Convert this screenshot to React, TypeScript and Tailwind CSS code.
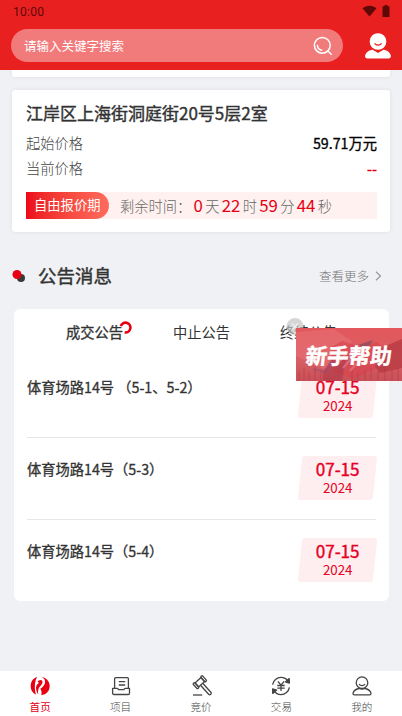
import type { ReactNode } from "react";

const notices = [
    { title: "体育场路14号 （5-1、5-2）", date: "07-15", year: "2024" },
    { title: "体育场路14号（5-3）", date: "07-15", year: "2024" },
    { title: "体育场路14号（5-4）", date: "07-15", year: "2024" },
];

const countdown = [
    { value: "0", unit: "天" },
    { value: "22", unit: "时" },
    { value: "59", unit: "分" },
    { value: "44", unit: "秒" },
];

const tabs = ["成交公告", "中止公告", "终结公告"];

const navItems: { label: string; icon: ReactNode; active?: boolean }[] = [
    {
        label: "首页",
        active: true,
        icon: (
            <g fill="#e60012" stroke="none">
                <path d="M7 1C3.200 2.200.7 5.800.7 10c0 4 2 7.300 5.300 8.600C4.300 13 4.400 6 7 1Z" />
                <path d="M7.200 6.200C8.600 4.200 11 3.400 12.200 4.800c1.100 1.500-.3 3.900-2.500 6-1.400 1.500-1.900 4-1.500 7.700C6 15.500 5.500 11.500 6.600 9.300c.7-1.200 2-1.800 2.200-2.600.1-.6-.7-.8-1.600-.5Z" />
                <path d="M11 .8c5 .6 8.700 4.500 8.700 9.200 0 5-3.500 8.700-8.400 9.200.7-2.500.2-4.900-1-6.500C13.300 11 15.400 8 15 5 14.700 3 13.300 1.600 11 .8Z" />
            </g>
        ),
    },
    {
        label: "项目",
        icon: (
            <>
                <path d="M3.600 12V2.800c0-.7.500-1.200 1.200-1.200h11.400c.7 0 1.200.5 1.200 1.200V12" />
                <path d="M1.600 12.300h4.600c.5 0 .8.900 1.400 1.300h5.200c.6-.4.9-1.300 1.400-1.300h4.300v5c0 .7-.5 1.200-1.200 1.200H2.800c-.7 0-1.200-.5-1.200-1.200Z" />
                <path d="M7.800 5.700h6.400M7.800 9h6.400" />
            </>
        ),
    },
    {
        label: "竞价",
        icon: (
            <>
                <g transform="translate(8.800 6.200) rotate(-42)">
                    <rect x="-4" y="-2.700" width="8" height="5.400" />
                    <rect x="-6.300" y="-3.500" width="2.300" height="7" rx="1" />
                    <rect x="4" y="-3.500" width="2.300" height="7" rx="1" />
                    <path d="M-1.500 2.700v12.200c0 1.900 3 1.900 3 0V2.700" />
                </g>
                <path d="M2 19h9.200" />
            </>
        ),
    },
    {
        label: "交易",
        icon: (
            <>
                <path d="M1.600 8.600C2.300 4.500 5.800 1.400 10 1.400c3 0 5.600 1.500 7.200 3.900M18.400 11.400c-.7 4.100-4.200 7.200-8.400 7.200-3 0-5.600-1.500-7.200-3.900" />
                <path d="m18.200 2.600.2 4.500-4-1.200ZM1.800 17.400l-.2-4.500 4 1.200Z" fill="#444" />
                <path d="m6.900 5.300 3.100 3.900 3.100-3.900M6.300 9.500h7.400M6.300 12.200h7.400M10 9.200v5.900" />
            </>
        ),
    },
    {
        label: "我的",
        icon: (
            <>
                <circle cx="10" cy="6.700" r="5.800" />
                <path d="M7 8.200c1.500 2 4.500 2 6 0M6.900 12.500c-2.700.7-5.400 2.100-5.800 4.600-.2 1 .3 1.700 1.300 1.700h15.200c1 0 1.500-.7 1.300-1.700-.4-2.500-3.100-3.900-5.800-4.600-2 .9-4.200.9-6.200 0Z" />
            </>
        ),
    },
];

function Header() {
    return (
        <header className="relative z-10 h-[70px] bg-[#e92020]">
            <div className="flex h-[22px] items-center justify-between pl-[13px] pr-3 text-[#5e0808]">
                <span className="pt-px font-[Roboto] text-[12px] tracking-[0.3px]">10:00</span>
                <div className="flex items-center gap-[5px] pb-px">
                    <svg width="15" height="12" viewBox="0 0 15 12" fill="currentColor">
                        <path d="M.5 3.200C4.500-.2 10.500-.2 14.500 3.200L7.500 11.500Z" />
                    </svg>
                    <svg width="8" height="12" viewBox="0 0 8 12" fill="currentColor">
                        <path d="M2.500 0h3v1.200H7.500V12h-7V1.200h2Z" />
                    </svg>
                </div>
            </div>
            <div className="flex items-center justify-between pl-[11px] pr-[10px] pt-[7px]">
                <div className="flex h-[33px] w-[332px] items-center justify-between rounded-full bg-[#f17a7b] pl-[13px] pr-[10px]">
                    <span className="pt-0.5 text-[12.5px] text-white">请输入关键字搜索</span>
                    <svg width="20" height="20" viewBox="0 0 20 20" fill="none" stroke="white" strokeWidth="1.500" strokeLinecap="round">
                        <circle cx="9.300" cy="9.300" r="7.900" />
                        <path d="m15 15 3.200 3.200M4.400 9.600c.3 2.400 1.900 4.100 4.300 4.600" />
                    </svg>
                </div>
                <svg width="28" height="28" viewBox="0 0 28 28" fill="white">
                    <path d="M8.500 17.600 14 21l5.600-3.400c3.600 1 7 3 7.300 6.500 0 1.500-.9 2.300-2.300 2.300H3.300c-1.400 0-2.300-.8-2.200-2.300.3-3.500 3.800-5.500 7.400-6.500Z" />
                    <circle cx="14" cy="9.500" r="9.100" stroke="#e92020" strokeWidth="1.500" />
                    <path d="M11 11.700c1.800 1.700 4.400 1.700 6.200 0" fill="none" stroke="#e92020" strokeWidth="1.300" strokeLinecap="round" />
                </svg>
            </div>
        </header>
    );
}

function AuctionCard() {
    return (
        <section className="mx-3 mt-[13px] h-[142px] rounded-[3px] bg-white px-3.5 pt-[11px] shadow-[0_0_4px_rgba(0,0,0,0.08)]">
            <h2 className="text-[17px] leading-6 text-[#333] [-webkit-text-stroke:0.4px]">江岸区上海街洞庭街20号5层2室</h2>
            <div className="mt-[5px] flex h-[25px] items-center justify-between text-[14.25px]">
                <span className="font-light text-[#444]">起始价格</span>
                <span className="mr-[-1px] text-black [-webkit-text-stroke:0.3px]">59.71万元</span>
            </div>
            <div className="flex h-[26px] items-center justify-between text-[14.25px]">
                <span className="font-light text-[#444]">当前价格</span>
                <span className="mr-[-1px] text-[#e60012] [-webkit-text-stroke:0.3px]">--</span>
            </div>
            <div className="mr-[-1px] mt-[11px] flex h-[27px] items-center bg-[#fff1ef]">
                <span className="flex h-full w-[83px] items-center rounded-r-full bg-linear-to-r from-[#ec0519] to-[#ff6b5d] pb-0.5 pl-2 text-[13.3px] text-white">
                    自由报价期
                </span>
                <div className="ml-[11px] flex items-center text-[14.25px] text-[#666]">
                    <span className="w-[73.500px] font-light">剩余时间：</span>
                    {countdown.map((item) => (
                        <span key={item.unit} className="flex items-center">
                            <span className="text-[16.8px] text-[#e60012]">{item.value}</span>
                            <span className="mx-[2.3px] font-light">{item.unit}</span>
                        </span>
                    ))}
                </div>
            </div>
        </section>
    );
}

function NoticeHeading() {
    return (
        <div className="mt-[30px] flex h-7 items-center pl-3 pr-5">
            <svg width="14" height="14" viewBox="0 0 14 14">
                <circle cx="9" cy="9" r="4" fill="#3a3a3a" />
                <circle cx="5" cy="5.500" r="4.500" fill="#e60012" />
            </svg>
            <h2 className="ml-3 flex-1 text-[18.5px] text-[#333] [-webkit-text-stroke:0.4px]">公告消息</h2>
            <span className="text-[12.5px] font-light text-[#777]">查看更多</span>
            <svg className="ml-1.5" width="7" height="10" viewBox="0 0 7 10" fill="none" stroke="#999" strokeWidth="1.200">
                <path d="m1 .8 4.500 4.200L1 9.200" />
            </svg>
        </div>
    );
}

function NoticeList() {
    return (
        <section className="ml-3.5 mr-[13px] mt-[19px] h-[292px] rounded-md bg-white px-[13px]">
            <div className="mx-3.5 flex h-[47px] pb-0.5 text-[14.25px] text-[#333]">
                {tabs.map((tab, index) => (
                    <div key={tab} className="flex flex-1 items-center justify-center">
                        <span className={index === 0 ? "relative [-webkit-text-stroke:0.3px]" : "font-normal"}>
                            {tab}
                            {index === 0 && (
                                <svg className="absolute -right-[9px] top-0" width="13" height="13" viewBox="0 0 13 13" fill="none" stroke="#e60012" strokeWidth="2.600">
                                    <path d="M1.800 5.200A4.900 4.900 0 1 1 5.700 11.400" />
                                </svg>
                            )}
                        </span>
                    </div>
                ))}
            </div>
            <ul>
                {notices.map((notice) => (
                    <li key={notice.title} className="flex h-[82.200px] justify-between border-b border-[#e6e6e6] pt-[18px] last:border-b-0">
                        <h3 className="pt-0.5 text-[14.25px] leading-[21px] text-[#333] [-webkit-text-stroke:0.3px]">{notice.title}</h3>
                        <div className="mr-[1.500px] h-11 w-[75px] -skew-x-6 rounded-[3px] bg-[#ffeef0]">
                            <div className="flex skew-x-6 flex-col items-center pt-0.5 text-[#e60022]">
                                <span className="text-[17.100px] leading-[22px] [-webkit-text-stroke:0.4px]">{notice.date}</span>
                                <span className="-mt-px text-[13.300px] leading-[18px]">{notice.year}</span>
                            </div>
                        </div>
                    </li>
                ))}
            </ul>
        </section>
    );
}

function HelpBanner() {
    return (
        <aside className="absolute right-0 top-[318px] h-[63px] w-[116px]">
            <svg className="absolute left-0 top-0" width="18" height="18" viewBox="0 0 18 18">
                <circle cx="9" cy="8.500" r="8.500" fill="#c4c4c4" opacity="0.700" />
                <path d="m6 5.500 6 6m0-6-6 6" stroke="white" strokeWidth="1.500" opacity="0.600" />
            </svg>
            <div className="absolute bottom-0 right-0 flex h-[53px] w-[106px] items-center justify-center overflow-hidden bg-[#df555b]">
                <svg className="absolute inset-0" width="106" height="53" viewBox="0 0 106 53">
                    <defs>
                        <linearGradient id="haze" x1="0" y1="0" x2="0" y2="1">
                            <stop offset="0" stopColor="#e2575b" />
                            <stop offset="0.600" stopColor="#d95f65" />
                            <stop offset="1" stopColor="#c94f58" />
                        </linearGradient>
                    </defs>
                    <path d="M0 0h106v53H0Z" fill="url(#haze)" />
                    <path d="M0 4 38 1l18 12-10 20-18 8L0 28Z" fill="#ea7377" opacity="0.500" />
                    <path d="m34 20 12-7 17 6 18-5 13 10-15 17-22 10-20-8Z" fill="#d9434b" opacity="0.600" />
                    <path d="m106 11-21 9-6 19 5 6 22-5Z" fill="#b83a42" opacity="0.800" />
                    <path d="m27 44 11-17 5 7 7-5-4 24H27Z" fill="#a73443" opacity="0.500" />
                    <path d="m62 17 15-5-3 5-7 2Z" fill="#9d4e5f" />
                    <path d="m17 41 12 3 7-10 10 7 12-18" fill="none" stroke="#80518a" strokeWidth="1.500" opacity="0.500" />
                    <path d="M3 43v10M8 40v13M13 44v9M19 39v14M25 42v11M56 42v11M62 45v8M69 42v11M75 40v13M82 43v10M89 39v14M96 42v11M102 40v13" stroke="#ae3441" strokeWidth="1" opacity="0.500" />
                    <path d="m42 36 10-13m-5 17 12-14m-5 17 12-14" stroke="#f18b8d" strokeWidth="2" opacity="0.500" />
                </svg>
                <span className="relative -skew-x-6 text-[21.500px] font-bold leading-none text-white [-webkit-text-stroke:0.5px]">新手帮助</span>
            </div>
        </aside>
    );
}

function BottomNav() {
    return (
        <nav className="absolute inset-x-0 bottom-0 flex h-[45px] bg-white">
            {navItems.map((item) => (
                <div key={item.label} className="flex flex-1 flex-col items-center pt-[5px]">
                    <svg className="overflow-visible" width="20" height="20" viewBox="0 0 20 20" fill="none" stroke="#444" strokeWidth="1.300" strokeLinejoin="round">
                        {item.icon}
                    </svg>
                    <span className={item.active ? "mt-[3px] text-[10.600px] leading-4 text-[#e60012]" : "mt-[3px] text-[10.600px] font-light leading-4 text-[#444]"}>
                        {item.label}
                    </span>
                </div>
            ))}
        </nav>
    );
}

export default function App() {
    return (
        <main className="relative h-[716px] w-[402px] overflow-hidden bg-[#f0f1f4] font-['Noto_Sans_CJK_SC',sans-serif]">
            <Header />
            <div className="mx-3 h-[7px] rounded-b-[3px] bg-white shadow-[0_0_4px_rgba(0,0,0,0.08)]" />
            <AuctionCard />
            <NoticeHeading />
            <NoticeList />
            <HelpBanner />
            <BottomNav />
        </main>
    );
}
